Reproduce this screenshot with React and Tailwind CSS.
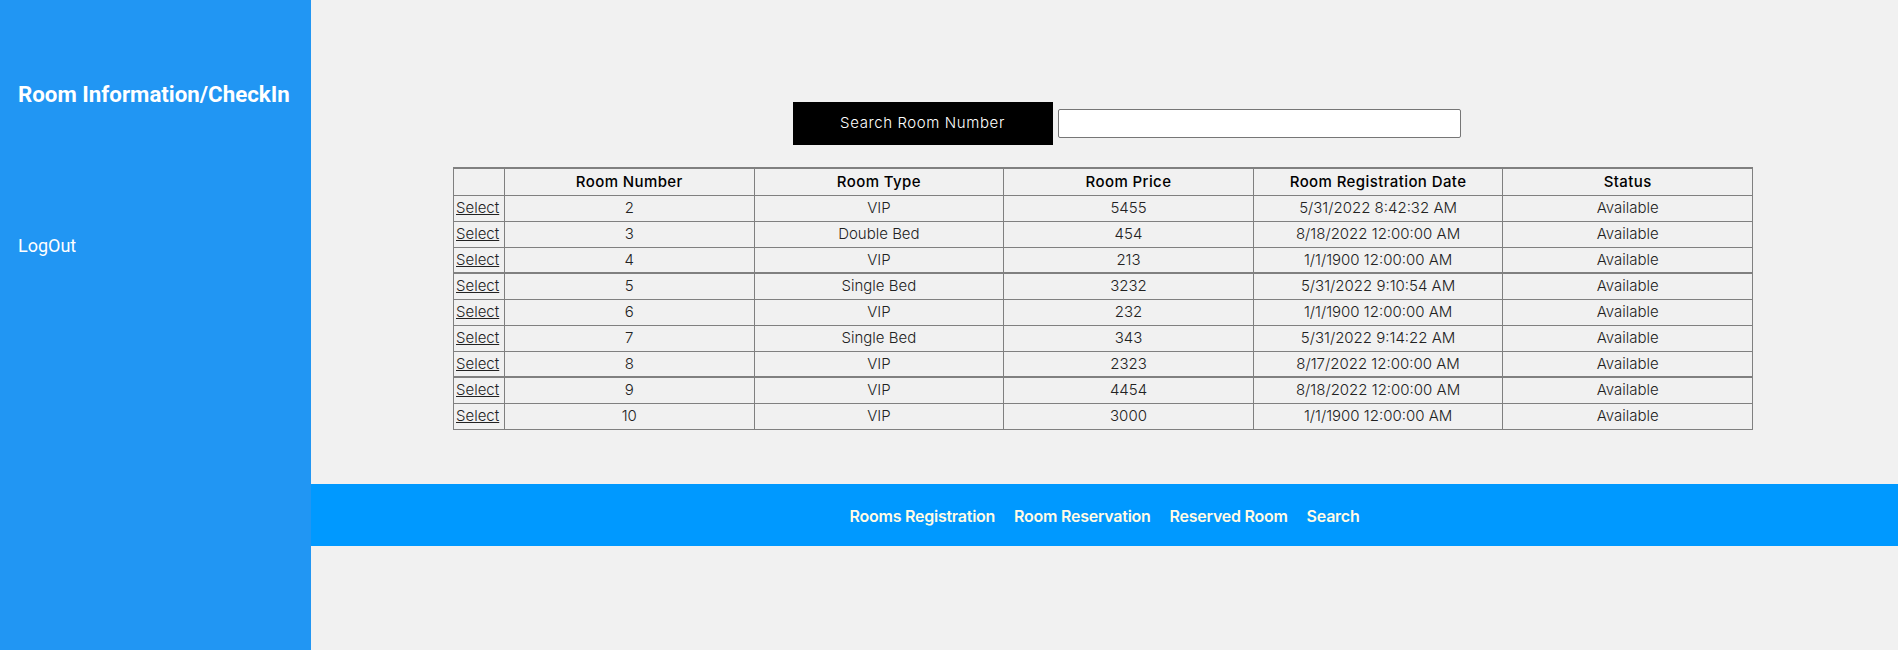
import React from "react";

const rooms = [
  { no: "2", type: "VIP", price: "5455", date: "5/31/2022 8:42:32 AM" },
  { no: "3", type: "Double Bed", price: "454", date: "8/18/2022 12:00:00 AM" },
  { no: "4", type: "VIP", price: "213", date: "1/1/1900 12:00:00 AM" },
  { no: "5", type: "Single Bed", price: "3232", date: "5/31/2022 9:10:54 AM", thick: true },
  { no: "6", type: "VIP", price: "232", date: "1/1/1900 12:00:00 AM" },
  { no: "7", type: "Single Bed", price: "343", date: "5/31/2022 9:14:22 AM" },
  { no: "8", type: "VIP", price: "2323", date: "8/17/2022 12:00:00 AM" },
  { no: "9", type: "VIP", price: "4454", date: "8/18/2022 12:00:00 AM", thick: true },
  { no: "10", type: "VIP", price: "3000", date: "1/1/1900 12:00:00 AM" },
];

const headers = ["Room Number", "Room Type", "Room Price", "Room Registration Date", "Status"];
const links = ["Rooms Registration", "Room Reservation", "Reserved Room", "Search"];

const App = () => {
  return (
    <div className="flex w-full h-[650px] bg-[#f1f1f1]">
      <aside className="w-[311px] shrink-0 bg-[#2196f3] text-white font-['Roboto',sans-serif] px-[18px] pt-[80px]">
        <h2 className="text-[22.3px] font-bold leading-[28px]">Room Information/CheckIn</h2>
        <a href="#" className="block mt-[127px] text-[18px] leading-[22px]">LogOut</a>
      </aside>

      <main className="flex-1 flex flex-col font-['Inter',sans-serif]">
        <div className="flex items-center justify-center gap-[5px] pt-[102px] pl-[44px]">
          <button className="w-[260px] h-[43px] bg-black text-white text-[15px] font-light tracking-[0.6px]">Search Room Number</button>
          <input type="text" className="w-[403px] h-[29px] bg-white border border-[#767676] rounded-[2px]" />
        </div>

        <div className="flex justify-center mt-[22px] pr-[3px]">
          <table className="w-[1300px] table-fixed border-collapse border border-t-2 border-[#808080] text-[15px]">
            <colgroup>
              <col className="w-[51px]" />
              <col />
              <col />
              <col />
              <col />
              <col />
            </colgroup>
            <thead>
              <tr className="h-[27px]">
                <th className="border border-[#808080]"></th>
                {headers.map((h) => (
                  <th key={h} className="border border-[#808080] font-medium text-black tracking-[0.4px]">{h}</th>
                ))}
              </tr>
            </thead>
            <tbody>
              {rooms.map((r) => (
                <tr key={r.no} className={r.thick ? "h-[26px] border-t-2 border-[#808080]" : "h-[26px]"}>
                  <td className="border border-[#808080] px-[2px] text-left">
                    <a href="#" className="underline text-[#222] font-light">Select</a>
                  </td>
                  <td className="border border-[#808080] text-center text-[#222] font-light">{r.no}</td>
                  <td className="border border-[#808080] text-center text-[#222] font-light">{r.type}</td>
                  <td className="border border-[#808080] text-center text-[#222] font-light">{r.price}</td>
                  <td className="border border-[#808080] text-center text-[#222] font-light">{r.date}</td>
                  <td className="border border-[#808080] text-center text-[#222] font-light">Available</td>
                </tr>
              ))}
            </tbody>
          </table>
        </div>

        <nav className="mt-[54px] h-[62px] bg-[#0099ff] flex items-center justify-center gap-[19px] pt-[3px]">
          {links.map((l) => (
            <a key={l} href="#" className="text-[#fffbe6] text-[16px] font-semibold tracking-[-0.25px]">{l}</a>
          ))}
        </nav>
      </main>
    </div>
  );
};

export default App;
